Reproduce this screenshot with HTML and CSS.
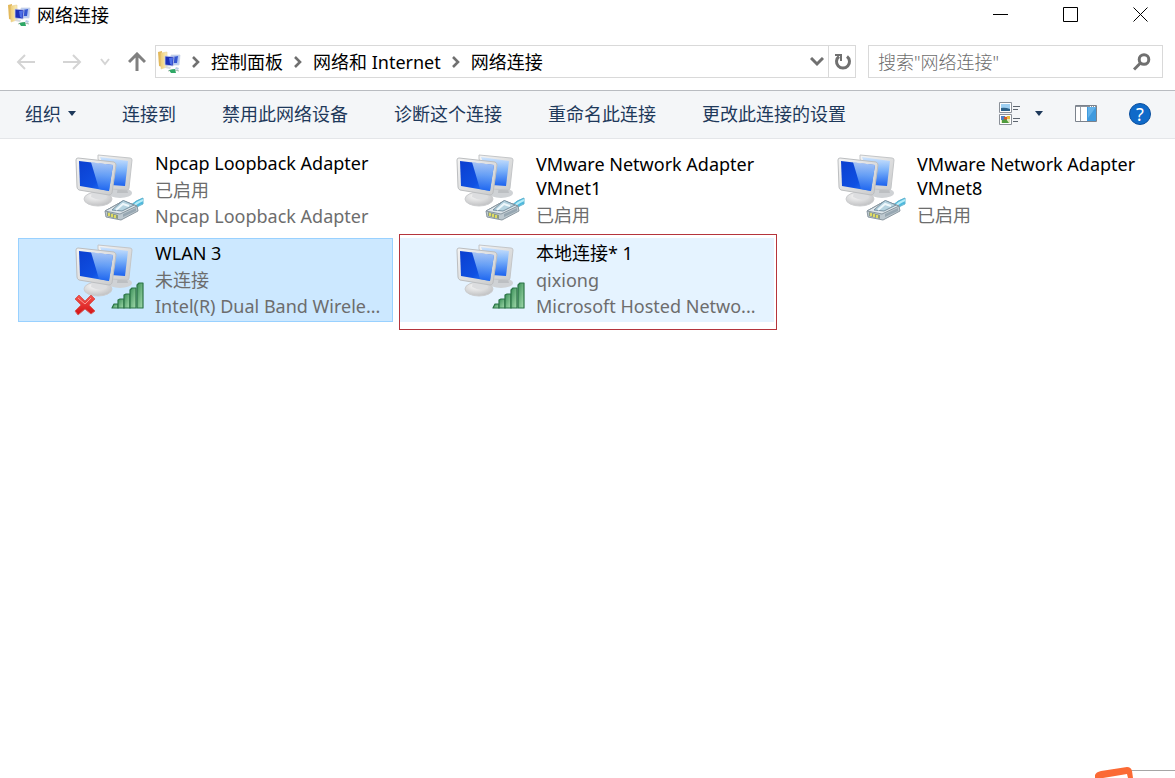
FILE: index.html
```html
<!DOCTYPE html>
<html lang="zh-CN">
<head>
  <meta charset="UTF-8">
  <meta name="viewport" content="width=device-width, initial-scale=1.0">
  <title>网络连接</title>
  <link rel="stylesheet" href="styles.css">
</head>
<body>

  <!-- Shared icons -->
  <svg class="sprite" aria-hidden="true">
    <defs>
      <linearGradient id="screen" x1="0" y1="0" x2="1" y2="1">
        <stop offset="0" stop-color="#0b3fd0"/>
        <stop offset="0.6" stop-color="#0f50e2"/>
        <stop offset="1" stop-color="#2f86ff"/>
      </linearGradient>
      <linearGradient id="screenLight" x1="0" y1="0" x2="0" y2="1">
        <stop offset="0" stop-color="#cfe4fc"/>
        <stop offset="0.45" stop-color="#7db3fa"/>
        <stop offset="1" stop-color="#1c62ee"/>
      </linearGradient>
      <linearGradient id="bezel" x1="0" y1="0" x2="1" y2="1">
        <stop offset="0" stop-color="#f4f4f4"/>
        <stop offset="1" stop-color="#c9cacb"/>
      </linearGradient>
      <radialGradient id="stand" cx="0.4" cy="0.3" r="0.8">
        <stop offset="0" stop-color="#fafafa"/>
        <stop offset="1" stop-color="#b9babc"/>
      </radialGradient>
      <linearGradient id="bar" x1="0" y1="0" x2="1" y2="1">
        <stop offset="0" stop-color="#3a8f58"/>
        <stop offset="1" stop-color="#a5dcae"/>
      </linearGradient>
      <linearGradient id="cross" x1="0" y1="0" x2="0" y2="1">
        <stop offset="0" stop-color="#f5554f"/>
        <stop offset="1" stop-color="#d30f12"/>
      </linearGradient>
      <linearGradient id="folder" x1="0" y1="0" x2="1" y2="0">
        <stop offset="0" stop-color="#f0cf78"/>
        <stop offset="1" stop-color="#fbeebb"/>
      </linearGradient>
    </defs>
    <symbol id="computers" viewBox="0 0 72 70">
      <ellipse cx="45" cy="39" rx="12" ry="5" fill="#cfd2d5"/>
      <path d="M43 32h8l2 7h-11z" fill="#bcbfc2"/>
      <path d="M23 1 55 4Q57 4 57 6L54 34Q54 36 52 36L36 35 23 5z" fill="url(#bezel)" stroke="#c4c6c8"/>
      <path d="M25 3 53 7 50 32 36 31z" fill="url(#screenLight)"/>
      <ellipse cx="23" cy="45" rx="14" ry="7" fill="url(#stand)" stroke="#cccdcf"/>
      <path d="M17 36 30 38 32 44Q25 48 16 43z" fill="#dcdddf"/>
      <path d="M3 4 39 8Q41 9 41 11L37 39Q36 41 34 41L4 36Q2 35 2 33L1 6Q1 4 3 4z" fill="url(#bezel)" stroke="#bcbec0"/>
      <path d="M4 7 38 11 34 37 5 32z" fill="url(#screen)"/>
      <path d="M16 8 38 11 34 37 24 35z" fill="url(#screenLight)" opacity="0.8"/>
    </symbol>
    <symbol id="plug" viewBox="0 0 42 26">
      <path d="M27 9Q33 3 40 1L40 7Q35 8 31 14z" fill="#4db9de" stroke="#62b4d0"/>
      <path d="M30 9Q35 5 40 3" fill="none" stroke="#b4ecf8" stroke-width="2"/>
      <path d="M2 14 20 4 34 9 35 14 18 23 3 20z" fill="#bdc8cf" stroke="#8b98a1"/>
      <path d="M2 14 20 4 34 9 17 17z" fill="#dfe7eb" stroke="#8896a0"/>
      <path d="M9 13 18 5Q20 2 24 5L31 8 19 14z" fill="#b5d3e0" stroke="#7890a0"/>
      <path d="M13 13 20 7 26 9" fill="none" stroke="#eef7fb" stroke-width="2"/>
      <path d="M4 15 15 18v4L4 19z" fill="#8c9a84"/>
      <path d="M6 16v3M9 17v3M12 18v3" stroke="#dedb62" stroke-width="2"/>
      <path d="M20 17 33 11v3L20 20z" fill="#97a7b2"/>
    </symbol>
    <symbol id="signal" viewBox="0 0 34 28">
      <g fill="url(#bar)" stroke="#2b7446" stroke-width="1.2" stroke-linejoin="round">
        <path d="M1 26 3 22H7V26z"/>
        <path d="M7 26V18L9 17H13V26z"/>
        <path d="M13 26V13L15 12H19V26z"/>
        <path d="M19 26V8L21 6H25V26z"/>
        <path d="M26 26V3L28 1H32V26z"/>
      </g>
    </symbol>
    <symbol id="offline" viewBox="0 0 22 22">
      <path d="M5 1 11 7 17 1 21 5 15 11 21 17 17 20 11 15 4 21 1 17 7 11 1 5z" fill="url(#cross)" stroke="#d2605e" stroke-linejoin="round"/>
      <path d="M4 4 11 10 17 4" fill="none" stroke="#fa9a95"/>
    </symbol>
    <symbol id="network" viewBox="0 0 24 24">
      <path d="M1 2 5 1 5 17 2 16z" fill="#e3b95c"/>
      <path d="M4 3 10 2 10 17 4 19z" fill="url(#folder)" stroke="#e9d296" stroke-width="0.6"/>
      <path d="M14 5 23 5 22 15 14 15z" fill="#b4c8f2" stroke="#cdd4e4" stroke-width="0.8"/>
      <path d="M16 7 21 6 20 13 16 13z" fill="#3556cf"/>
      <path d="M8 6 17 7 16 16 8 15z" fill="#1c2fb8" stroke="#c3cbe8" stroke-width="0.8"/>
      <path d="M12 8 16 8 15 15 13 14z" fill="#4e70e6"/>
      <path d="M9 16 14 17 13 19 8 18z" fill="#d7dade"/>
      <path d="M11 21Q16 18 22 21" fill="none" stroke="#aab8b0" stroke-width="1"/>
      <path d="M12 20 18 19 19 23 14 23z" fill="#2fa866"/>
      <path d="M19 17 22 18 21 20 18 19z" fill="#b9cce6"/>
    </symbol>
    <symbol id="chevron" viewBox="0 0 8 12">
      <path d="M1 1 6 6 1 11" fill="none" stroke="#707070" stroke-width="2.6"/>
    </symbol>
  </svg>

  <div class="window">
    <header class="titlebar">
      <svg class="app-icon"><use href="#network"/></svg>
      <h1>网络连接</h1>
      <div class="window-buttons">
        <button type="button" aria-label="最小化"><svg width="16" height="16"><path d="M0 7.500H15"/></svg></button>
        <button type="button" aria-label="最大化"><svg width="16" height="16"><path d="M.5.5h14v14H.5z"/></svg></button>
        <button type="button" aria-label="关闭"><svg width="16" height="16"><path d="M.5.5l14 14M14.500.5l-14 14"/></svg></button>
      </div>
    </header>

    <div class="nav-row">
      <div class="history">
        <button type="button" class="faded" aria-label="后退"><svg width="20" height="18"><path d="M19 9H2M9 2 2 9 9 16"/></svg></button>
        <button type="button" class="faded" aria-label="前进"><svg width="20" height="18"><path d="M1 9H18M11 2 18 9 11 16"/></svg></button>
        <button type="button" class="faded recent" aria-label="最近浏览的位置"><svg width="10" height="8"><path d="M1 1 5 6 9 1"/></svg></button>
        <button type="button" class="up" aria-label="上移"><svg width="18" height="20"><path d="M9 19V3M1 10 9 2 17 10"/></svg></button>
      </div>
      <nav class="address">
        <svg class="app-icon"><use href="#network"/></svg>
        <svg class="sep"><use href="#chevron"/></svg>
        <a href="#">控制面板</a>
        <svg class="sep"><use href="#chevron"/></svg>
        <a href="#">网络和 Internet</a>
        <svg class="sep"><use href="#chevron"/></svg>
        <a href="#">网络连接</a>
        <button type="button" class="drop" aria-label="展开"><svg width="14" height="10"><path d="M1 1 7 7 13 1"/></svg></button>
        <button type="button" class="refresh" aria-label="刷新"><svg width="18" height="18"><path d="M13 3.500A6.500 6.500 0 1 1 5 3.500"/><path d="M1 2H7V8" stroke-width="2"/></svg></button>
      </nav>
      <form class="search">
        <input type="search" aria-label="搜索" placeholder='搜索"网络连接"'>
        <button type="button" aria-label="搜索"><svg width="18" height="18"><circle cx="11" cy="6.500" r="4.800"/><path d="M7.500 10 1 16.500" stroke-width="3"/></svg></button>
      </form>
    </div>

    <div class="toolbar">
      <button type="button">组织<span class="caret"></span></button>
      <button type="button">连接到</button>
      <button type="button">禁用此网络设备</button>
      <button type="button">诊断这个连接</button>
      <button type="button">重命名此连接</button>
      <button type="button">更改此连接的设置</button>
      <div class="toolbar-right">
        <button type="button" aria-label="更改视图">
          <svg width="22" height="24">
            <path d="M.5.500h12v10H.5zM.5 12.500h12v10H.5z" fill="#fff" stroke="#8a9098"/>
            <path d="M2 2h9v7H2z" fill="#9fd0f2"/>
            <path d="M2 6Q6 5 11 7V9H2z" fill="#2c6188"/>
            <path d="M2 14h9v7H2z" fill="#e4ecc0"/>
            <path d="M2 14h4v4H2z" fill="#4f7fc4"/>
            <path d="M5 15h3v3H5z" fill="#d9532f"/>
            <path d="M8 14h3v3H8z" fill="#e8b93c"/>
            <path d="M3 18 7 17 10 21H3z" fill="#4f9b3e"/>
            <path d="M14 4.500h7M14 7.500h5M14 16.500h7M14 19.500h5" stroke="#5c646e"/>
          </svg>
          <span class="caret"></span>
        </button>
        <button type="button" aria-label="显示预览窗格">
          <svg width="22" height="18">
            <path d="M.5.500h21v16H.5z" fill="#fff" stroke="#7b828c"/>
            <path d="M1 1h20v1H1z" fill="#8b929b"/>
            <path d="M15 1.500h1M17 1.500h1M19 1.500h1" stroke="#fff"/>
            <path d="M5.500 2V16" stroke="#9aa0a8"/>
            <path d="M12 2h9v14H12z" fill="#3f9ade"/>
            <path d="M13 2 21 2 13 13z" fill="#63b2ea"/>
          </svg>
        </button>
        <button type="button" class="help" aria-label="帮助">?</button>
      </div>
    </div>

    <main>
      <ul class="connections">
        <li>
          <a class="tile" href="#">
            <span class="tile-icon"><svg class="pc"><use href="#computers"/></svg><svg class="plug"><use href="#plug"/></svg></span>
            <span class="tile-text">
              <strong>Npcap Loopback Adapter</strong>
              <span>已启用</span>
              <span>Npcap Loopback Adapter</span>
            </span>
          </a>
        </li>
        <li>
          <a class="tile" href="#">
            <span class="tile-icon"><svg class="pc"><use href="#computers"/></svg><svg class="plug"><use href="#plug"/></svg></span>
            <span class="tile-text">
              <strong>VMware Network Adapter VMnet1</strong>
              <span>已启用</span>
            </span>
          </a>
        </li>
        <li>
          <a class="tile" href="#">
            <span class="tile-icon"><svg class="pc"><use href="#computers"/></svg><svg class="plug"><use href="#plug"/></svg></span>
            <span class="tile-text">
              <strong>VMware Network Adapter VMnet8</strong>
              <span>已启用</span>
            </span>
          </a>
        </li>
        <li>
          <a class="tile selected" href="#">
            <span class="tile-icon"><svg class="pc"><use href="#computers"/></svg><svg class="offline"><use href="#offline"/></svg><svg class="signal"><use href="#signal"/></svg></span>
            <span class="tile-text">
              <strong>WLAN 3</strong>
              <span>未连接</span>
              <span>Intel(R) Dual Band Wirele...</span>
            </span>
          </a>
        </li>
        <li>
          <a class="tile hovered marked" href="#">
            <span class="tile-icon"><svg class="pc"><use href="#computers"/></svg><svg class="signal"><use href="#signal"/></svg></span>
            <span class="tile-text">
              <strong>本地连接* 1</strong>
              <span>qixiong</span>
              <span>Microsoft Hosted Netwo...</span>
            </span>
          </a>
        </li>
      </ul>
    </main>

    <footer>
      <svg width="80" height="12">
        <path d="M36 4.500H80" stroke="#a6a6a6"/>
        <path d="M0 12V9Q1 6 6 5L32 1Q36 1 37 5L38 12H33L32 8 8 12z" fill="#fb6a35"/>
      </svg>
    </footer>
  </div>

</body>
</html>
```
FILE: styles.css
```css
* {
  box-sizing: border-box;
}

body {
  margin: 0;
  background-color: #fff;
  color: #000;
  font-family: "Noto Sans", "Noto Sans CJK SC", sans-serif;
  font-size: 18px;
  line-height: 24px;
}

button {
  display: flex;
  align-items: center;
  padding: 0;
  border: none;
  background: none;
  color: inherit;
  font: inherit;
  white-space: nowrap;
}

a {
  color: inherit;
  text-decoration: none;
}

svg {
  display: block;
  flex: none;
}

.sprite {
  position: absolute;
  width: 0;
  height: 0;
}

.window {
  display: flex;
  flex-direction: column;
  min-height: 100vh;
}

/* Title bar */
.titlebar {
  display: flex;
  align-items: center;
  height: 29px;
  padding: 0 26px 0 7px;
}

.titlebar h1 {
  margin: 0 0 0 6px;
  font-size: 18px;
  font-weight: 400;
}

.app-icon {
  width: 24px;
  height: 24px;
}

.window-buttons {
  display: flex;
  gap: 54px;
  margin-left: auto;
}

.window-buttons svg {
  fill: none;
  stroke: #000;
}

/* Navigation row */
.nav-row {
  display: flex;
  align-items: center;
  padding: 16px 12px 12px 16px;
}

.history {
  display: flex;
  align-items: center;
  width: 139px;
  flex: none;
  gap: 18px;
}

.history svg {
  fill: none;
  stroke: #808080;
  stroke-width: 3;
}

.history .faded svg {
  stroke: #d4d4d4;
  stroke-width: 2;
}

.history button:nth-child(2) {
  margin-left: 8px;
}

.address {
  display: flex;
  align-items: center;
  flex: 1;
  height: 33px;
  padding-left: 1px;
  border: 1px solid #d9d9d9;
  white-space: nowrap;
}

.sep {
  width: 8px;
  height: 12px;
  margin: 0 11px;
}

.address svg:not([class]) {
  fill: none;
  stroke: #707070;
  stroke-width: 3;
}

.drop {
  margin-left: auto;
  padding: 0 4px;
}

.refresh {
  height: 31px;
  padding: 0 3px 0 5px;
  border-left: 1px solid #d9d9d9;
}

.search {
  display: flex;
  align-items: center;
  flex: 0 1 295px;
  min-width: 0;
  height: 33px;
  margin-left: 12px;
  padding: 0 11px 0 9px;
  border: 1px solid #d9d9d9;
}

.search input {
  flex: 1;
  min-width: 0;
  padding: 0;
  border: none;
  outline: none;
  background: none;
  font: inherit;
  font-weight: 300;
}

.search input::placeholder {
  color: #6d6d6d;
}

.search svg {
  fill: none;
  stroke: #707070;
  stroke-width: 3;
}

/* Toolbar */
.toolbar {
  display: flex;
  align-items: center;
  gap: 46px;
  height: 49px;
  padding: 0 24px 2px 25px;
  border-top: 1px solid #b9bcc1;
  border-bottom: 1px solid #e4e6e9;
  background-color: #f4f6f8;
  color: #1e395b;
}

.caret {
  margin-left: 7px;
  border: 4px solid transparent;
  border-top: 5px solid #1e395b;
  border-bottom: none;
}

.toolbar-right {
  display: flex;
  align-items: center;
  gap: 32px;
  margin-left: auto;
}

.toolbar-right .caret {
  margin-left: 14px;
}

.toolbar-right .help {
  justify-content: center;
  width: 22px;
  height: 22px;
  border: 1px solid #0a4f9e;
  border-radius: 50%;
  background-color: #0f6ac9;
  color: #fff;
}

/* Connections */
.connections {
  display: grid;
  grid-template-columns: repeat(3, minmax(0, 1fr));
  gap: 6px;
  margin: 0;
  padding: 9px 20px 9px 18px;
  list-style: none;
}

.tile {
  display: flex;
  align-items: center;
  position: relative;
  height: 84px;
  padding-left: 56px;
  border: 1px solid transparent;
}

.selected {
  border-color: #99d1ff;
  background-color: #cce8ff;
}

.hovered {
  background-color: #e5f3ff;
}

/* Red frame drawn round the hosted network */
.marked::after {
  content: "";
  position: absolute;
  inset: -5px -4px -9px -1px;
  border: 1px solid #b5343c;
}

.tile-icon {
  position: relative;
  flex: none;
  width: 72px;
  height: 72px;
}

.pc {
  width: 72px;
  height: 70px;
}

.plug,
.signal,
.offline {
  position: absolute;
}

.plug {
  right: 2px;
  bottom: 3px;
  width: 42px;
  height: 26px;
}

.signal {
  right: 2px;
  bottom: 6px;
  width: 34px;
  height: 28px;
}

.offline {
  left: -1px;
  bottom: 0;
  width: 22px;
  height: 22px;
}

.tile-text {
  display: flex;
  flex-direction: column;
  flex: 1;
  min-width: 0;
  margin-left: 8px;
}

.tile-text strong {
  margin-bottom: 2px;
  font-weight: 400;
}

.tile-text span {
  overflow: hidden;
  color: #6d6d6d;
  line-height: 26px;
  text-overflow: ellipsis;
  white-space: nowrap;
}

/* Bottom corner */
footer {
  display: flex;
  justify-content: flex-end;
  margin-top: auto;
}
```
